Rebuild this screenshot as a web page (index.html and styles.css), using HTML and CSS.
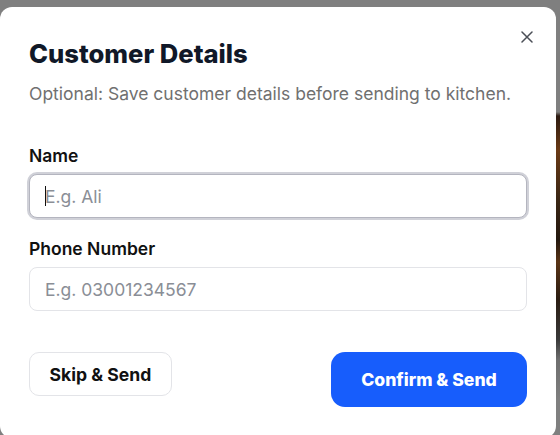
FILE: index.html
```html
<!DOCTYPE html>
<html lang="en">
<head>
<meta charset="utf-8">
<title>Customer Details</title>
<link rel="stylesheet" href="styles.css">
</head>
<body>
<div class="stage">
  <div class="modal">
    <button class="close" aria-label="Close">
      <svg width="12" height="12" viewBox="0 0 12 12"><path d="M1 1L11 11M11 1L1 11" stroke="#4b4f57" stroke-width="1.5" stroke-linecap="round"/></svg>
    </button>
    <h1 class="title">Customer Details</h1>
    <p class="subtitle">Optional: Save customer details before sending to kitchen.</p>
    <div class="form">
      <label class="label">Name</label>
      <div class="input-wrap">
        <input class="input input-focus" type="text" placeholder="E.g. Ali">
        <span class="caret"></span>
      </div>
      <label class="label label-gap">Phone Number</label>
      <input class="input" type="text" placeholder="E.g. 03001234567">
    </div>
    <div class="actions">
      <button class="btn-skip">Skip &amp; Send</button>
      <button class="btn-confirm">Confirm &amp; Send</button>
    </div>
  </div>
  <div class="backdrop-strip"></div>
</div>
</body>
</html>
```
FILE: styles.css
```css
html, body {
  margin: 0;
  padding: 0;
  width: 560px;
  height: 435px;
  overflow: hidden;
  background: #7f7f7f;
  font-family: Inter, "Noto Sans", sans-serif;
}
.stage {
  display: flex;
  height: 435px;
}
.modal {
  position: relative;
  box-sizing: border-box;
  width: 556px;
  height: 431px;
  margin-top: 7px;
  background: #ffffff;
  border-radius: 12px;
  padding: 31px 29px 0;
  flex-shrink: 0;
}
.backdrop-strip {
  flex: 1;
  background: linear-gradient(180deg, #7f7f7f 0, #7f7f7f 112px, #2c1a10 116px, #6a3a16 150px, #3a2614 200px, #24180f 240px, #5a3416 262px, #2a1c12 300px, #3a3a3a 340px, #6e6e6e 360px, #7f7f7f 400px);
}
.close {
  position: absolute;
  top: 24px;
  right: 23px;
  width: 12px;
  height: 12px;
  padding: 0;
  border: 0;
  background: none;
  display: flex;
}
.title {
  margin: 0;
  font-size: 25.6px;
  line-height: 32px;
  font-weight: 800;
  color: #101828;
}
.subtitle {
  margin: 12px 0 0;
  font-size: 17.5px;
  line-height: 24px;
  color: #707070;
}
.form {
  margin-top: 38px;
  display: flex;
  flex-direction: column;
}
.label {
  font-size: 17.5px;
  line-height: 24px;
  font-weight: 600;
  color: #111111;
  margin-bottom: 6px;
}
.label-gap {
  margin-top: 19px;
}
.input-wrap {
  position: relative;
  display: flex;
}
.input {
  box-sizing: border-box;
  width: 498px;
  height: 44px;
  border: 1px solid #e3e4e8;
  border-radius: 8px;
  padding: 0 15px;
  font-family: Inter, "Noto Sans", sans-serif;
  font-size: 17.5px;
  color: #111111;
  background: #ffffff;
  outline: none;
}
.input::placeholder {
  color: #8a8e96;
}
.input-focus {
  border-color: #b4b5bf;
  box-shadow: 0 0 0 2px #d0d1d8;
}
.caret {
  position: absolute;
  left: 16px;
  top: 12px;
  width: 1px;
  height: 20px;
  background: #111111;
}
.actions {
  margin-top: 41px;
  display: flex;
  justify-content: space-between;
  align-items: flex-start;
}
.btn-skip {
  box-sizing: border-box;
  width: 143px;
  height: 44px;
  border: 1px solid #e3e4e8;
  border-radius: 10px;
  background: #ffffff;
  font-family: Inter, "Noto Sans", sans-serif;
  font-size: 17.6px;
  font-weight: 700;
  color: #111111;
}
.btn-confirm {
  box-sizing: border-box;
  width: 196px;
  height: 55px;
  border: 0;
  border-radius: 14px;
  background: #175dfc;
  font-family: Inter, "Noto Sans", sans-serif;
  font-size: 17.6px;
  font-weight: 800;
  color: #ffffff;
}
```
